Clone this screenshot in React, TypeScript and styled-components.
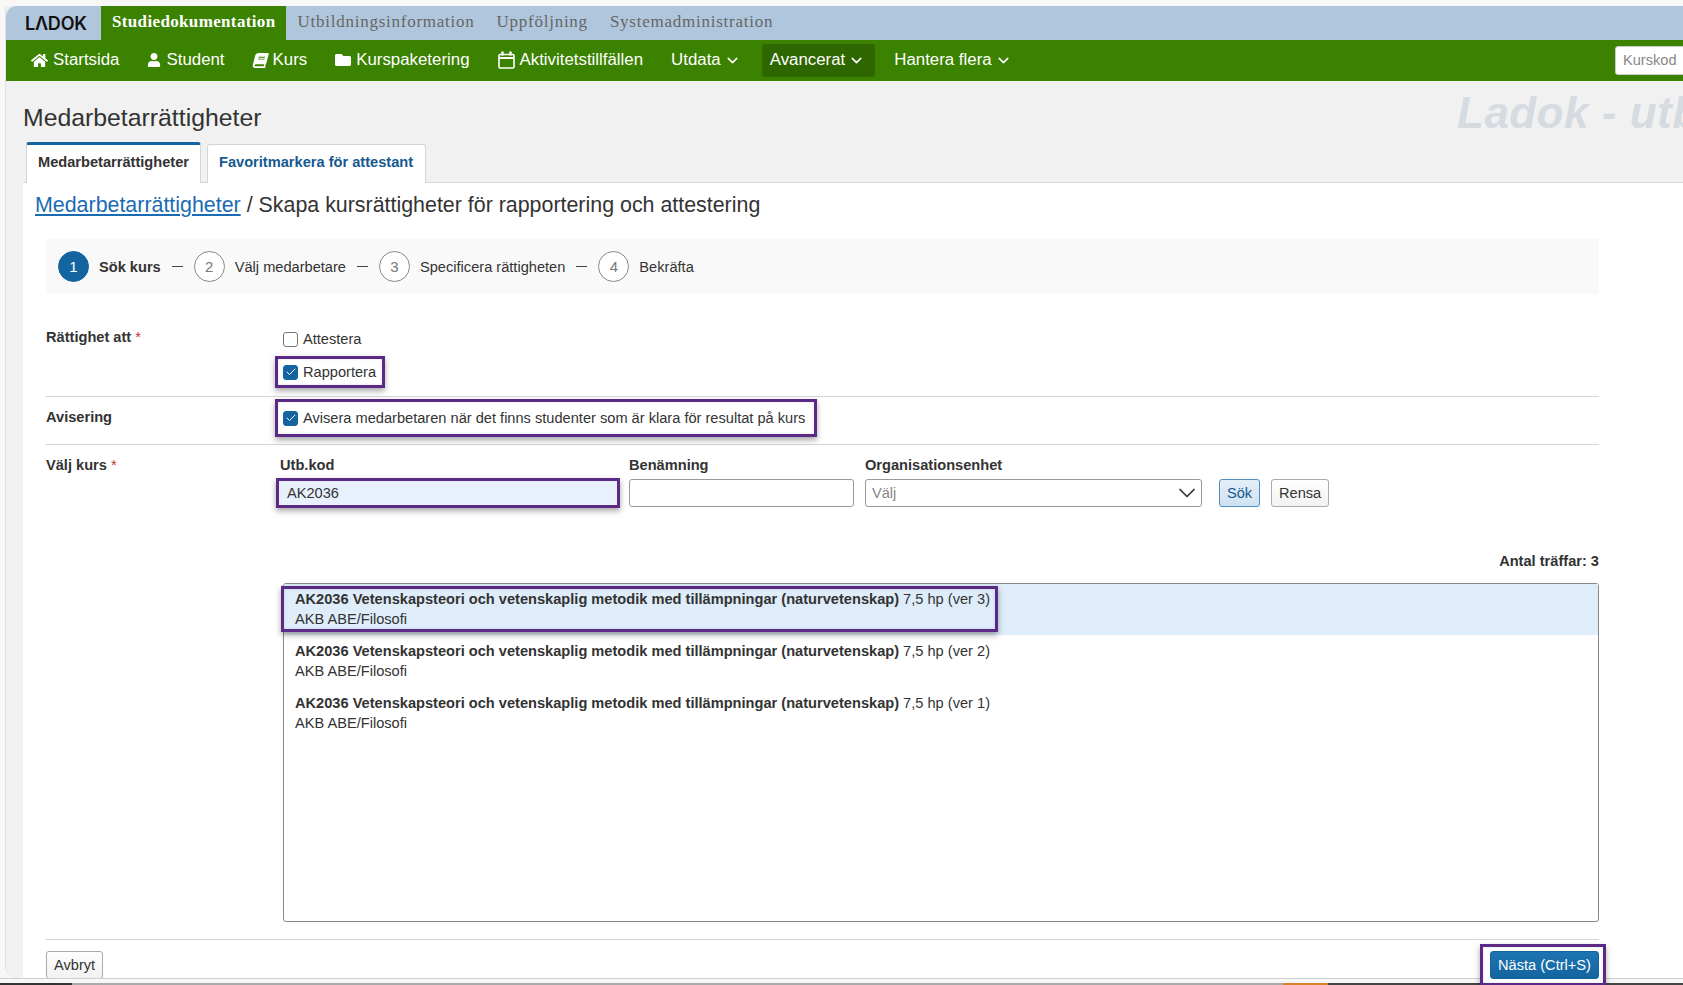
import { FaBook, FaFolder, FaHome, FaUser } from 'react-icons/fa'
import { Check, ChevronDown } from 'lucide-react'
import styled, { createGlobalStyle } from 'styled-components'

const GlobalStyle = createGlobalStyle`
	html, body {
		margin: 0;
		padding: 0;
		background: #f7f7f7;
	}
	* {
		box-sizing: border-box;
	}
`

const Page = styled.div`
	width: 1683px;
	height: 985px;
	overflow: hidden;
	display: flex;
	flex-direction: column;
	background: #f7f7f7;
	font-family: 'Liberation Sans', Arial, sans-serif;
	font-size: 14.62px;
	line-height: 20px;
	color: #333;
`

const Window = styled.div`
	height: 972px;
	flex-shrink: 0;
	margin-top: 6px;
	margin-left: 5px;
	display: flex;
	flex-direction: column;
	background: #f1f1f1;
	border-left: 1px solid #e2e2e2;
	border-bottom-left-radius: 12px;
`

const TopBar = styled.div`
	height: 34px;
	flex-shrink: 0;
	display: flex;
	background: #b0c6dd;
	border-top-left-radius: 10px;
`

const Logo = styled.div`
	width: 95px;
	padding-left: 19px;
	font-family: Inter, 'Liberation Sans', sans-serif;
	font-size: 18px;
	line-height: 36px;
	font-weight: 600;
	letter-spacing: -0.2px;
	color: #111;
`

const TopTab = styled.div<{ $active?: boolean }>`
	padding: 0 11px;
	font-family: 'Liberation Serif', 'Times New Roman', serif;
	font-size: 17px;
	line-height: 31px;
	letter-spacing: ${props => (props.$active ? '0.35px' : '0.75px')};
	font-weight: ${props => (props.$active ? 700 : 400)};
	color: ${props => (props.$active ? '#fff' : '#666')};
	background: ${props => (props.$active ? '#3a8200' : 'transparent')};
`

const NavBar = styled.nav`
	height: 41px;
	flex-shrink: 0;
	display: flex;
	align-items: center;
	gap: 11px;
	padding-left: 17px;
	background: #3a8200;
`

const NavItem = styled.div<{ $open?: boolean; $drop?: boolean }>`
	height: 33px;
	display: flex;
	align-items: center;
	gap: 5px;
	padding: 0 ${props => (props.$drop ? '10px' : '9px')} 1px 8px;
	border-radius: 3px;
	font-size: 16.85px;
	color: #fff;
	background: ${props => (props.$open ? '#2e6600' : 'transparent')};
	white-space: nowrap;

	svg {
		flex-shrink: 0;
	}
`

const Caret = styled(ChevronDown)`
	margin-left: -2px;
`

const TiltedBook = styled(FaBook)`
	transform: skewX(-14deg);
`

const QuickSearch = styled.input`
	width: 90px;
	height: 29px;
	margin-left: auto;
	margin-right: -22px;
	padding: 0 7px 1px;
	border: 1px solid #ccc;
	border-radius: 3px;
	font: 14.62px 'Liberation Sans', Arial, sans-serif;

	&::placeholder {
		color: #888;
	}
`

const Heading = styled.div`
	height: 61px;
	flex-shrink: 0;
	display: flex;
	justify-content: space-between;
	padding: 22px 0 0 17px;
`

const Title = styled.h1`
	margin: 0;
	font-size: 24.8px;
	line-height: 30px;
	font-weight: 400;
	white-space: nowrap;
`

const Watermark = styled.div`
	margin: -12px -70px 0 0;
	flex-shrink: 0;
	width: 296px;
	overflow: hidden;
	font-size: 44px;
	line-height: 44px;
	font-weight: 700;
	font-style: italic;
	letter-spacing: 0.5px;
	color: #d5dbe1;
	white-space: nowrap;
`

const Tabs = styled.div`
	display: flex;
	align-items: flex-end;
	gap: 6px;
	margin: 0 0 -1px 20px;
	position: relative;
	z-index: 1;
`

const Tab = styled.div<{ $active?: boolean }>`
	padding: 0 ${props => (props.$active ? '11px' : '12px')} 4px 11px;
	line-height: 34px;
	font-size: 14.62px;
	font-weight: 700;
	background: #fff;
	white-space: nowrap;
	color: ${props => (props.$active ? '#333' : '#14598f')};
	border: 1px solid #d5d5d5;
	border-bottom: none;
	border-top: ${props => (props.$active ? '3px solid #14659f' : '1px solid #d5d5d5')};
	border-radius: 3px 3px 0 0;
`

const Panel = styled.main`
	flex: 1;
	min-height: 0;
	margin-left: 17px;
	padding: 7px 84px 0 23px;
	background: #fff;
	border-top: 1px solid #d5d5d5;
`

const Breadcrumb = styled.div`
	margin-left: -11px;
	font-size: 21.4px;
	line-height: 30px;
	white-space: nowrap;

	a {
		color: #1a6bb5;
		text-decoration: underline;
	}
`

const Stepper = styled.div`
	height: 55px;
	margin-top: 19px;
	display: flex;
	align-items: center;
	padding-left: 12px;
	background: #f9f9f9;
`

const StepCircle = styled.span<{ $active?: boolean }>`
	width: 31px;
	height: 31px;
	display: flex;
	align-items: center;
	justify-content: center;
	flex-shrink: 0;
	border-radius: 50%;
	font-size: 15px;
	background: ${props => (props.$active ? '#14659f' : '#fff')};
	color: ${props => (props.$active ? '#fff' : '#777')};
	border: 1px solid ${props => (props.$active ? '#14659f' : '#888')};
`

const StepLabel = styled.span<{ $active?: boolean }>`
	margin-left: 10px;
	font-size: 14.62px;
	font-weight: ${props => (props.$active ? 700 : 400)};
	white-space: nowrap;
`

const StepDash = styled.span`
	width: 11px;
	height: 1px;
	margin: 0 11px;
	flex-shrink: 0;
	background: #444;
`

const FormRow = styled.section<{ $line?: boolean; $top: number }>`
	display: grid;
	grid-template-columns: 229px 1fr;
	padding-top: ${props => props.$top}px;
	border-bottom: ${props => (props.$line ? '1px solid #d5d5d5' : 'none')};
`

const RowLabel = styled.div<{ $top: number }>`
	padding-top: ${props => props.$top}px;
	font-weight: 700;
`

const Required = styled.span`
	color: #c0392b;
	font-weight: 400;
`

const CheckColumn = styled.div`
	padding-top: 5px;
`

const Marked = styled.div`
	border: 3px solid #5b2a86;
	box-shadow: 0 3px 6px rgba(0, 0, 0, 0.35), inset 0 0 3px rgba(0, 0, 0, 0.12);
	position: relative;
	z-index: 2;
`

const CheckMark = styled(Marked)<{ $height: number; $bottom: number; $right: number }>`
	width: fit-content;
	height: ${props => props.$height}px;
	margin-bottom: ${props => props.$bottom}px;
	display: flex;
	align-items: center;
	padding: 0 ${props => props.$right}px 0 5px;
	background: #fff;
`

const CheckLine = styled.label`
	display: flex;
	align-items: center;
	gap: 5px;
	white-space: nowrap;
`

const PlainCheck = styled(CheckLine)`
	padding-left: 8px;
	margin-bottom: 7px;
`

const Box = styled.span<{ $checked?: boolean }>`
	width: 15px;
	height: 15px;
	display: flex;
	align-items: center;
	justify-content: center;
	flex-shrink: 0;
	border-radius: 3px;
	background: ${props => (props.$checked ? '#14659f' : '#fff')};
	border: 1px solid ${props => (props.$checked ? '#14659f' : '#767676')};
	color: #fff;
`

const SearchFields = styled.div`
	display: flex;
	align-items: flex-start;
	gap: 11px;
	padding-left: 5px;
`

const Field = styled.div<{ $width: number }>`
	width: ${props => props.$width}px;
	flex-shrink: 0;
`

const FieldLabel = styled.div`
	height: 24px;
	font-weight: 700;
`

const TextInput = styled.input`
	width: 100%;
	height: 28px;
	display: block;
	padding: 0 8px;
	border: 1px solid #999;
	border-radius: 3px;
	background: #fff;
	color: #333;
	font: 14.62px 'Liberation Sans', Arial, sans-serif;
`

const MarkedInputWrap = styled(Marked)`
	width: 344px;
	height: 30px;
	margin: -1px 0 0 -4px;

	input {
		height: 24px;
		border: none;
		border-radius: 0;
		background: #e8f0fe;
	}
`

const SelectWrap = styled.div`
	position: relative;
	height: 28px;
	color: #333;
`

const SelectInput = styled.select`
	width: 100%;
	height: 28px;
	display: block;
	padding: 0 6px;
	appearance: none;
	border: 1px solid #999;
	border-radius: 3px;
	background: #fff;
	color: #888;
	font: 14.62px 'Liberation Sans', Arial, sans-serif;
`

const SelectCaret = styled(ChevronDown)`
	position: absolute;
	top: 0;
	right: 1px;
	pointer-events: none;
`

const Button = styled.button<{ $variant?: 'search' | 'primary' }>`
	height: 28px;
	padding: 0 7px;
	flex-shrink: 0;
	border-radius: 3px;
	font: 14.62px 'Liberation Sans', Arial, sans-serif;
	border: 1px solid
		${props => (props.$variant === 'search' ? '#4d8fc0' : props.$variant === 'primary' ? '#14659f' : '#aaa')};
	color: ${props => (props.$variant === 'search' ? '#14598f' : props.$variant === 'primary' ? '#fff' : '#333')};
	background: ${props =>
		props.$variant === 'search'
			? 'linear-gradient(#e4eff8, #cfe2f2)'
			: props.$variant === 'primary'
			? 'linear-gradient(#1d74b2, #14659f)'
			: 'linear-gradient(#fff, #f2f2f2)'};
`

const SearchButton = styled(Button)`
	width: 41px;
	margin-left: 6px;
	margin-top: 24px;
`

const ClearButton = styled(Button)`
	width: 58px;
	margin-top: 24px;
`

const HitCount = styled.div`
	margin-top: 43px;
	text-align: right;
	font-weight: 700;
`

const ResultList = styled.div`
	height: 339px;
	margin: 12px 0 0 8px;
	border: 1px solid #888;
	border-radius: 3px;
`

const ResultRow = styled.div<{ $selected?: boolean }>`
	padding: ${props => (props.$selected ? '2px 0 3px' : '6px 0 6px 11px')};
	background: ${props => (props.$selected ? '#deedf9' : 'transparent')};
`

const MarkedResult = styled(Marked)`
	width: fit-content;
	margin-left: -3px;
	padding: 0 5px 0 11px;
`

const Footer = styled.footer`
	margin-top: 17px;
	padding-top: 11px;
	display: flex;
	justify-content: space-between;
	align-items: flex-start;
	border-top: 1px solid #d5d5d5;
`

const MarkedButton = styled(Marked)`
	margin: -7px -7px 0 0;
	padding: 4px 4px 4px 7px;
	background: #fff;

	button {
		display: block;
		width: 109px;
		padding: 0;
	}
`

const Taskbar = styled.div`
	height: 7px;
	flex-shrink: 0;
	display: flex;
	align-items: flex-end;
	border-top: 1px solid #cfcfcf;
`

const TaskSegment = styled.span<{ $color: string; $width?: number }>`
	height: 2px;
	background: ${props => props.$color};
	width: ${props => (props.$width ? `${props.$width}px` : 'auto')};
	flex: ${props => (props.$width ? 'none' : '1')};
`

function CalendarIcon() {
	return (
		<svg width="17" height="18" viewBox="0 0 17 18" fill="none" stroke="currentColor" strokeWidth="1.6">
			<rect x="1" y="3.5" width="15" height="13.5" rx="1" />
			<path d="M1 7h15" strokeWidth="2" />
			<path d="M4.5 0.5v4M12.5 0.5v4" strokeWidth="2.4" />
		</svg>
	)
}

function Checked() {
	return (
		<Box $checked>
			<Check size={12} strokeWidth={2} />
		</Box>
	)
}

const steps = ['Sök kurs', 'Välj medarbetare', 'Specificera rättigheten', 'Bekräfta']

const courseName = 'AK2036 Vetenskapsteori och vetenskaplig metodik med tillämpningar (naturvetenskap)'

function ResultText({ version }: { version: number }) {
	return (
		<>
			<div>
				<b>{courseName}</b> 7,5 hp (ver {version})
			</div>
			<div>AKB ABE/Filosofi</div>
		</>
	)
}

function StepGroup({ step, index }: { step: string; index: number }) {
	const active = index === 0
	return (
		<>
			{index > 0 && <StepDash />}
			<StepCircle $active={active}>{index + 1}</StepCircle>
			<StepLabel $active={active}>{step}</StepLabel>
		</>
	)
}

export default function App() {
	return (
		<Page>
			<GlobalStyle />
			<Window>
				<TopBar>
					<Logo>LΛDOK</Logo>
					<TopTab $active>Studiedokumentation</TopTab>
					<TopTab>Utbildningsinformation</TopTab>
					<TopTab>Uppföljning</TopTab>
					<TopTab>Systemadministration</TopTab>
				</TopBar>
				<NavBar>
					<NavItem>
						<FaHome size={17} />
						Startsida
					</NavItem>
					<NavItem>
						<FaUser size={14} />
						Student
					</NavItem>
					<NavItem>
						<TiltedBook size={15} />
						Kurs
					</NavItem>
					<NavItem>
						<FaFolder size={16} />
						Kurspaketering
					</NavItem>
					<NavItem>
						<CalendarIcon />
						Aktivitetstillfällen
					</NavItem>
					<NavItem $drop>
						Utdata
						<Caret size={17} strokeWidth={2.2} />
					</NavItem>
					<NavItem $drop $open>
						Avancerat
						<Caret size={17} strokeWidth={2.2} />
					</NavItem>
					<NavItem $drop>
						Hantera flera
						<Caret size={17} strokeWidth={2.2} />
					</NavItem>
					<QuickSearch placeholder="Kurskod" />
				</NavBar>
				<Heading>
					<Title>Medarbetarrättigheter</Title>
					<Watermark>Ladok - utbildning</Watermark>
				</Heading>
				<Tabs>
					<Tab $active>Medarbetarrättigheter</Tab>
					<Tab>Favoritmarkera för attestant</Tab>
				</Tabs>
				<Panel>
					<Breadcrumb>
						<a href="#">Medarbetarrättigheter</a> / Skapa kursrättigheter för rapportering och attestering
					</Breadcrumb>
					<Stepper>
						{steps.map((step, index) => (
							<StepGroup key={step} step={step} index={index} />
						))}
					</Stepper>
					<FormRow $line $top={30}>
						<RowLabel $top={3}>
							Rättighet att <Required>*</Required>
						</RowLabel>
						<CheckColumn>
							<PlainCheck>
								<Box />
								Attestera
							</PlainCheck>
							<CheckMark $height={32} $bottom={8} $right={6}>
								<CheckLine>
									<Checked />
									Rapportera
								</CheckLine>
							</CheckMark>
						</CheckColumn>
					</FormRow>
					<FormRow $line $top={2}>
						<RowLabel $top={8}>Avisering</RowLabel>
						<CheckMark $height={38} $bottom={7} $right={9}>
							<CheckLine>
								<Checked />
								Avisera medarbetaren när det finns studenter som är klara för resultat på kurs
							</CheckLine>
						</CheckMark>
					</FormRow>
					<FormRow $top={10}>
						<RowLabel $top={0}>
							Välj kurs <Required>*</Required>
						</RowLabel>
						<div>
							<SearchFields>
								<Field $width={338}>
									<FieldLabel>Utb.kod</FieldLabel>
									<MarkedInputWrap>
										<TextInput defaultValue="AK2036" />
									</MarkedInputWrap>
								</Field>
								<Field $width={225}>
									<FieldLabel>Benämning</FieldLabel>
									<TextInput />
								</Field>
								<Field $width={337}>
									<FieldLabel>Organisationsenhet</FieldLabel>
									<SelectWrap>
										<SelectInput>
											<option>Välj</option>
										</SelectInput>
										<SelectCaret size={28} strokeWidth={1.5} />
									</SelectWrap>
								</Field>
								<SearchButton $variant="search">Sök</SearchButton>
								<ClearButton>Rensa</ClearButton>
							</SearchFields>
							<HitCount>Antal träffar: 3</HitCount>
							<ResultList>
								<ResultRow $selected>
									<MarkedResult>
										<ResultText version={3} />
									</MarkedResult>
								</ResultRow>
								<ResultRow>
									<ResultText version={2} />
								</ResultRow>
								<ResultRow>
									<ResultText version={1} />
								</ResultRow>
							</ResultList>
						</div>
					</FormRow>
					<Footer>
						<Button>Avbryt</Button>
						<MarkedButton>
							<Button $variant="primary">Nästa (Ctrl+S)</Button>
						</MarkedButton>
					</Footer>
				</Panel>
			</Window>
			<Taskbar>
				<TaskSegment $color="#333" $width={72} />
				<TaskSegment $color="#aaa" />
				<TaskSegment $color="#d9822b" $width={45} />
				<TaskSegment $color="#444" $width={355} />
			</Taskbar>
		</Page>
	)
}
